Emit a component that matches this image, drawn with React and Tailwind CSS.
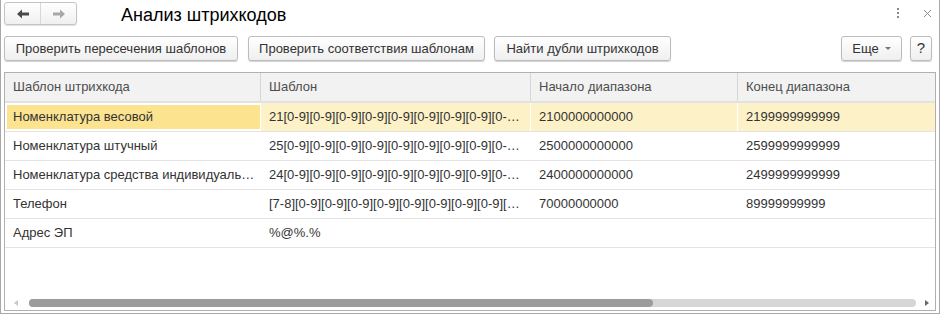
import React from "react";

const rows = [
  {
    name: "Номенклатура весовой",
    tpl: "21" + "[0-9]".repeat(11),
    from: "2100000000000",
    to: "2199999999999",
  },
  {
    name: "Номенклатура штучный",
    tpl: "25" + "[0-9]".repeat(11),
    from: "2500000000000",
    to: "2599999999999",
  },
  {
    name: "Номенклатура средства индивидуальной защиты",
    tpl: "24" + "[0-9]".repeat(11),
    from: "2400000000000",
    to: "2499999999999",
  },
  {
    name: "Телефон",
    tpl: "[7-8]" + "[0-9]".repeat(10),
    from: "70000000000",
    to: "89999999999",
  },
  { name: "Адрес ЭП", tpl: "%@%.%", from: "", to: "" },
];

const Button = ({ children, className = "" }) => (
  <button
    className={`h-[25px] flex items-center justify-center rounded-[3px] border border-[#bcbcbc] bg-linear-to-b from-white to-[#efefef] shadow-[0_1px_1px_rgba(0,0,0,0.18)] text-[13px] text-[#333] ${className}`}
  >
    {children}
  </button>
);

const ArrowLeft = ({ color }) => (
  <svg width="12" height="10" viewBox="0 0 12 10">
    <path d="M0 5 L5 0.5 L5 3.5 L12 3.5 L12 6.5 L5 6.5 L5 9.5 Z" fill={color} />
  </svg>
);

const ArrowRight = ({ color }) => (
  <svg width="12" height="10" viewBox="0 0 12 10">
    <path d="M12 5 L7 0.5 L7 3.5 L0 3.5 L0 6.5 L7 6.5 L7 9.5 Z" fill={color} />
  </svg>
);

export default function App() {
  return (
    <div className="w-[940px] h-[314px] bg-white border-x border-b border-[#a8a8a8] flex flex-col font-['Liberation_Sans',Arial,sans-serif] text-[#333]">
      {/* Title bar */}
      <div className="h-[30px] flex items-start pl-[3px] pr-[4px]">
        <div className="mt-[2px] w-[73px] h-[23px] flex rounded-[3px] border border-[#c4c4c4] bg-linear-to-b from-white to-[#f0f0f0] shadow-[0_1px_1px_rgba(0,0,0,0.12)]">
          <div className="flex-1 flex items-center justify-center border-r border-[#d8d8d8]">
            <ArrowLeft color="#4a4a4a" />
          </div>
          <div className="flex-1 flex items-center justify-center">
            <ArrowRight color="#a8a8a8" />
          </div>
        </div>
        <div className="ml-[44px] mt-[3px] text-[18px] leading-[24px] text-black">
          Анализ штрихкодов
        </div>
        <div className="ml-auto mt-[8px] flex flex-col gap-[2px] mr-[24px]">
          <span className="w-[2px] h-[2px] bg-[#8a8a8a]" />
          <span className="w-[2px] h-[2px] bg-[#8a8a8a]" />
          <span className="w-[2px] h-[2px] bg-[#8a8a8a]" />
        </div>
        <svg className="mt-[9px] mr-[3px]" width="9" height="9" viewBox="0 0 9 9">
          <path d="M1 1 L8 8 M8 1 L1 8" stroke="#8a8a8a" strokeWidth="1" />
        </svg>
      </div>

      {/* Command bar */}
      <div className="mt-[6px] h-[25px] flex pl-[3px] pr-[7px]">
        <Button className="w-[234px]">Проверить пересечения шаблонов</Button>
        <Button className="w-[237px] ml-[10px]">Проверить соответствия шаблонам</Button>
        <Button className="w-[177px] ml-[9px]">Найти дубли штрихкодов</Button>
        <Button className="w-[61px] ml-auto">
          Еще
          <svg className="ml-[6px]" width="6" height="4" viewBox="0 0 6 4">
            <path d="M0 0 L6 0 L3 3 Z" fill="#777" />
          </svg>
        </Button>
        <Button className="w-[22px] ml-[8px] text-[15px]">?</Button>
      </div>

      {/* Table */}
      <div className="mt-[11px] mx-[3px] mb-[2px] flex-1 border border-[#b0b0b0] flex flex-col text-[13px]">
        <div className="h-[30px] flex bg-[#f2f2f2] border-b-2 border-[#e2e2e2] text-[#4d4d4d]">
          <div className="w-[256px] pl-[8px] flex items-center border-r border-[#d6d6d6]">Шаблон штрихкода</div>
          <div className="w-[270px] pl-[8px] flex items-center border-r border-[#d6d6d6]">Шаблон</div>
          <div className="w-[207px] pl-[8px] flex items-center border-r border-[#d6d6d6]">Начало диапазона</div>
          <div className="flex-1 pl-[8px] flex items-center">Конец диапазона</div>
        </div>
        {rows.map((r, i) => {
          const sel = i === 0;
          return (
            <div
              key={r.name}
              className={`h-[29px] flex border-b border-[#e3e3e3] ${sel ? "bg-[#fdf1c7]" : "bg-white"}`}
            >
              <div
                className={`w-[256px] flex items-center border-r border-white min-w-0 ${
                  sel ? "bg-[#fce390] border-2 border-[#f5c332] pl-[6px] pr-[4px]" : "pl-[8px] pr-[5px]"
                }`}
              >
                <span className="truncate">{r.name}</span>
              </div>
              <div className="w-[270px] pl-[8px] pr-[10px] flex items-center border-r border-white min-w-0">
                <span className="truncate">{r.tpl}</span>
              </div>
              <div className="w-[207px] pl-[8px] flex items-center border-r border-white">{r.from}</div>
              <div className="flex-1 pl-[8px] flex items-center">{r.to}</div>
            </div>
          );
        })}
        <div className="flex-1" />
        <div className="h-[8px] mb-[3px] flex items-center">
          <svg className="ml-[9px]" width="4" height="6" viewBox="0 0 4 6">
            <path d="M4 0 L4 6 L0 3 Z" fill="#c8c8c8" />
          </svg>
          <div className="ml-[11px] w-[887px] h-[8px] rounded-full bg-[#d6d6d6] flex">
            <div className="w-[624px] h-[8px] rounded-full bg-[#9c9c9c]" />
          </div>
          <svg className="ml-[9px]" width="4" height="6" viewBox="0 0 4 6">
            <path d="M0 0 L0 6 L4 3 Z" fill="#666" />
          </svg>
        </div>
      </div>
    </div>
  );
}
